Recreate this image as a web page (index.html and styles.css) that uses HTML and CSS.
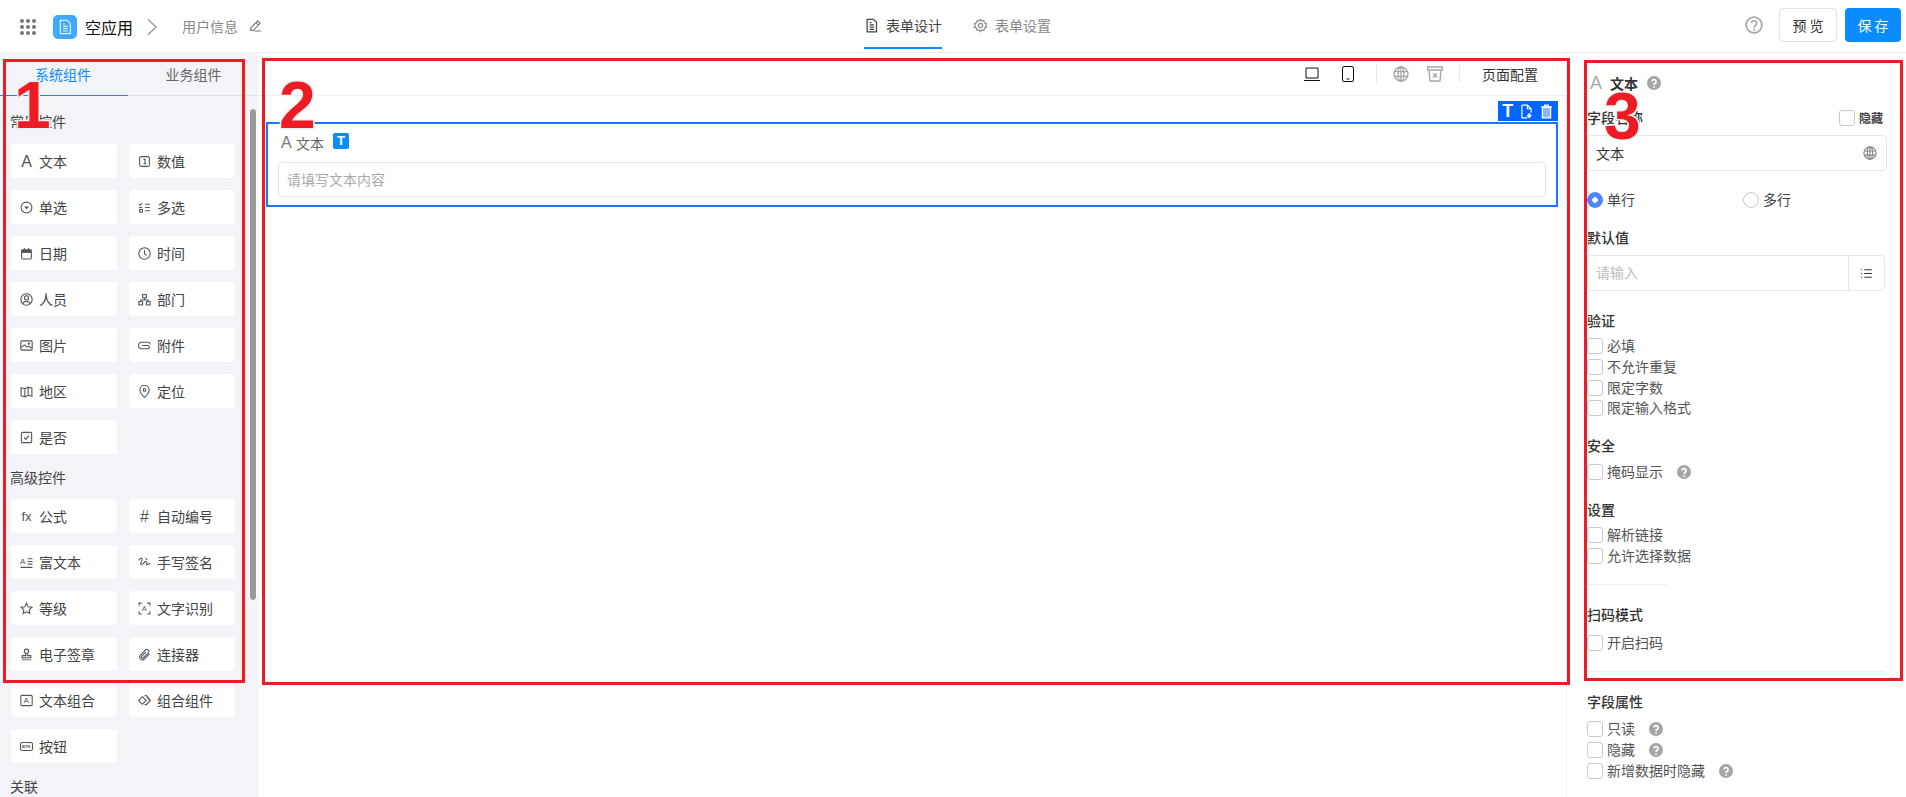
FILE: index.html
```html
<!DOCTYPE html>
<html lang="zh">
<head>
<meta charset="utf-8">
<title>表单设计</title>
<link rel="stylesheet" href="styles.css">
</head>
<body>
<svg class="sprite" aria-hidden="true">
  <symbol id="i-num" viewBox="0 0 24 24"><rect x="3" y="3" width="18" height="18" rx="3"/><path d="M10 8h3v8M10 16h5"/></symbol>
  <symbol id="i-drop" viewBox="0 0 24 24"><circle cx="12" cy="12" r="10"/><path class="solid" d="M7.500 10h9L12 15z"/></symbol>
  <symbol id="i-multi" viewBox="0 0 24 24"><path d="M2 6l2 2 4-4M13 6h9M13 12h9M13 18h9M2 12h6"/><rect x="3" y="15.500" width="5" height="5"/></symbol>
  <symbol id="i-date" viewBox="0 0 24 24"><rect x="3" y="5" width="18" height="17" rx="2"/><path class="solid" d="M3 5h18v6H3z"/><path d="M8 2v3M16 2v3"/></symbol>
  <symbol id="i-clock" viewBox="0 0 24 24"><circle cx="12" cy="12" r="10.500"/><path d="M12 6v6.500l4.500 3"/></symbol>
  <symbol id="i-person" viewBox="0 0 24 24"><circle cx="12" cy="12" r="10.500"/><circle cx="12" cy="9" r="3.800"/><path d="M5.500 19.500c1.500-5 11.500-5 13 0"/></symbol>
  <symbol id="i-dept" viewBox="0 0 24 24"><rect x="8.500" y="3" width="7" height="6"/><path d="M12 9v4M5 16v-3h14v3"/><rect x="1.500" y="16" width="7" height="6"/><rect x="15.500" y="16" width="7" height="6"/></symbol>
  <symbol id="i-image" viewBox="0 0 24 24"><rect x="1.500" y="3.500" width="21" height="17" rx="2"/><path d="M2 16l6-5 5 4 3-2 6 4"/><circle cx="16.500" cy="8.500" r="1.200"/></symbol>
  <symbol id="i-clip" viewBox="0 0 24 24"><path d="M23 10a5 5 0 0 0-5-4H7a6 6 0 0 0 0 12h11a3 3 0 0 0 0-6H8"/></symbol>
  <symbol id="i-map" viewBox="0 0 24 24"><path d="M2 5l7 2 6-3 7 2v15l-7-2-6 3-7-2zM9 7v15M15 4v15"/></symbol>
  <symbol id="i-pin" viewBox="0 0 24 24"><path d="M12 23s8.500-8 8.500-14a8.500 8.500 0 0 0-17 0c0 6 8.500 14 8.500 14z"/><circle cx="12" cy="9" r="2.500"/></symbol>
  <symbol id="i-yes" viewBox="0 0 24 24"><rect x="2.500" y="2.500" width="19" height="19" rx="2"/><path d="M7.500 12l3.500 3.500 5.500-7"/></symbol>
  <symbol id="i-rich" viewBox="0 0 24 24"><text class="svg-t" x="0" y="15" font-size="15">A</text><path d="M14 5h9M14 10h9M14 15h9M1 21h22"/></symbol>
  <symbol id="i-sign" viewBox="0 0 24 24"><path d="M2 8c2-6 8-5 5 1s-3 8 1 6 6-7 8-4-2 6 1 5 4-3 6-2M14 4l3 3"/></symbol>
  <symbol id="i-star" viewBox="0 0 24 24"><path d="M12 2.500l3 6.300 6.900.9-5 4.800 1.200 6.900-6.100-3.300-6.100 3.300 1.200-6.900-5-4.800 6.900-.9z"/></symbol>
  <symbol id="i-ocr" viewBox="0 0 24 24"><path d="M2 7V2h5M17 2h5v5M22 17v5h-5M7 22H2v-5"/><text class="svg-t" x="7.200" y="17" font-size="13">A</text></symbol>
  <symbol id="i-stamp" viewBox="0 0 24 24"><circle cx="12" cy="6" r="4"/><path d="M10.500 10v4H4v4h16v-4h-6.500v-4"/><path class="solid tint" d="M3 20h18v3H3z"/></symbol>
  <symbol id="i-link" viewBox="0 0 24 24"><path d="M21 11l-9 9a5 5 0 0 1-7.500-7l9-9a3.500 3.500 0 0 1 5.500 5l-9 9a2 2 0 0 1-3-3l8-8"/></symbol>
  <symbol id="i-group" viewBox="0 0 24 24"><rect x="1.500" y="2.500" width="21" height="19" rx="2"/><text class="svg-t" x="6.500" y="17.500" font-size="15">A</text></symbol>
  <symbol id="i-combo" viewBox="0 0 24 24"><path d="M8 5l7 7-7 7-7-7zM12 3.500l3-1 8 9.500-8 8-3-1M16 5.500l6.500 6.500"/></symbol>
  <symbol id="i-btn" viewBox="0 0 24 24"><rect x="1" y="4.500" width="22" height="15" rx="3"/><text class="svg-t" x="3.500" y="14.800" font-size="7.500" font-weight="700">BTN</text></symbol>
  <symbol id="i-globe" viewBox="0 0 24 24"><circle cx="12" cy="12" r="10.500"/><ellipse cx="12" cy="12" rx="4.500" ry="10.500"/><path d="M12 1.500v21M2 8.500h20M2 15.500h20"/></symbol>
  <symbol id="i-list" viewBox="0 0 24 24"><path d="M8 5h14M8 12h14M8 19h14M2 5h2M2 12h2M2 19h2"/></symbol>
  <symbol id="i-help" viewBox="0 0 24 24"><circle class="solid" cx="12" cy="12" r="12"/><path class="qm" d="M8.500 9.500a3.500 3.500 0 1 1 5.500 3c-1.500 1-2 1.500-2 3M12 17.500v2.500"/></symbol>
  <symbol id="i-doc" viewBox="0 0 24 24"><path d="M5 2h10l5 5v15H5zM9 11h7M9 14.500h7M9 18h7M9 7.500h3"/></symbol>
</svg>

<header class="topbar">
  <div class="brand">
    <span class="apps"><i></i><i></i><i></i><i></i><i></i><i></i><i></i><i></i><i></i></span>
    <span class="app-logo"><svg class="ico logo-doc"><use href="#i-doc"/></svg></span>
    <span class="app-name">空应用</span>
    <svg class="chevron" viewBox="0 0 12 20"><path d="M1.500 1.500L10.500 10l-9 8.500"/></svg>
    <span class="page-name">用户信息</span>
    <svg class="pencil" viewBox="0 0 24 24"><path d="M3 17L16 3.500l4.500 4.500L8 21H3zM13 7l4.500 4.500M10 22h12"/></svg>
  </div>
  <nav class="designer-tabs">
    <a class="designer-tab is-active"><svg class="ico tab-ico"><use href="#i-doc"/></svg>表单设计</a>
    <a class="designer-tab"><svg class="tab-ico gear" viewBox="0 0 24 24"><path d="M12 2l2 3 3.500-.8.900 3.500L22 9.500 20 12l2 2.500-3.600 1.800-.9 3.500-3.500-.8-2 3-2-3-3.500.8-.9-3.500L2 14.500 4 12 2 9.500l3.600-1.800.9-3.500 3.500.8z"/><circle cx="12" cy="12" r="3.500"/></svg>表单设置</a>
  </nav>
  <div class="actions">
    <svg class="top-help" viewBox="0 0 24 24"><circle cx="12" cy="12" r="10.500"/><path d="M8.500 9.500a3.500 3.500 0 1 1 5.500 3c-1.500 1-2 1.500-2 3M12 17v2.500"/></svg>
    <button class="btn btn-plain">预 览</button>
    <button class="btn btn-primary">保 存</button>
  </div>
</header>

<div class="workspace">
  <aside class="palette">
    <div class="palette-tabs">
      <span class="palette-tab is-active">系统组件</span>
      <span class="palette-tab">业务组件</span>
    </div>
    <div class="scroll-thumb"></div>
    <h3 class="group-title">常用控件</h3>
    <div class="widgets">
      <div class="widget"><span class="w-ico w-txt">A</span>文本</div>
      <div class="widget"><svg class="w-ico ico"><use href="#i-num"/></svg>数值</div>
      <div class="widget"><svg class="w-ico ico"><use href="#i-drop"/></svg>单选</div>
      <div class="widget"><svg class="w-ico ico"><use href="#i-multi"/></svg>多选</div>
      <div class="widget"><svg class="w-ico ico"><use href="#i-date"/></svg>日期</div>
      <div class="widget"><svg class="w-ico ico"><use href="#i-clock"/></svg>时间</div>
      <div class="widget"><svg class="w-ico ico"><use href="#i-person"/></svg>人员</div>
      <div class="widget"><svg class="w-ico ico"><use href="#i-dept"/></svg>部门</div>
      <div class="widget"><svg class="w-ico ico"><use href="#i-image"/></svg>图片</div>
      <div class="widget"><svg class="w-ico ico"><use href="#i-clip"/></svg>附件</div>
      <div class="widget"><svg class="w-ico ico"><use href="#i-map"/></svg>地区</div>
      <div class="widget"><svg class="w-ico ico"><use href="#i-pin"/></svg>定位</div>
      <div class="widget"><svg class="w-ico ico"><use href="#i-yes"/></svg>是否</div>
    </div>
    <h3 class="group-title">高级控件</h3>
    <div class="widgets">
      <div class="widget"><span class="w-ico w-txt w-fx">fx</span>公式</div>
      <div class="widget"><span class="w-ico w-txt">#</span>自动编号</div>
      <div class="widget"><svg class="w-ico ico"><use href="#i-rich"/></svg>富文本</div>
      <div class="widget"><svg class="w-ico ico"><use href="#i-sign"/></svg>手写签名</div>
      <div class="widget"><svg class="w-ico ico"><use href="#i-star"/></svg>等级</div>
      <div class="widget"><svg class="w-ico ico"><use href="#i-ocr"/></svg>文字识别</div>
      <div class="widget"><svg class="w-ico ico"><use href="#i-stamp"/></svg>电子签章</div>
      <div class="widget"><svg class="w-ico ico"><use href="#i-link"/></svg>连接器</div>
      <div class="widget"><svg class="w-ico ico"><use href="#i-group"/></svg>文本组合</div>
      <div class="widget"><svg class="w-ico ico"><use href="#i-combo"/></svg>组合组件</div>
      <div class="widget"><svg class="w-ico ico"><use href="#i-btn"/></svg>按钮</div>
    </div>
    <h3 class="group-title">关联</h3>
  </aside>

  <main class="canvas">
    <div class="canvas-bar">
      <svg class="bar-ico dark" viewBox="0 0 16 16"><path d="M2 2h12v10H2zM0 14.500h16"/></svg>
      <svg class="bar-ico dark phone" viewBox="0 0 12 16"><rect x=".5" y=".5" width="11" height="15" rx="1.500"/><path d="M4.500 13h3"/></svg>
      <span class="bar-sep"></span>
      <svg class="bar-ico ico muted"><use href="#i-globe"/></svg>
      <svg class="bar-ico muted bin" viewBox="0 0 16 16"><path d="M.5 1h15v3H.5zM2 4l1 11h10l1-11M6 7.500l4 4M10 7.500l-4 4"/></svg>
      <span class="bar-sep sep-wide"></span>
      <span class="bar-link">页面配置</span>
    </div>
    <div class="stage">
      <div class="field-tools">
        <span class="tool-t">T</span>
        <svg class="tool-ico" viewBox="0 0 12 16"><path d="M1 1h6l4 4v4M7 1v4h4M1 1v14h6"/><path class="tool-plus" d="M9 10v5M6.500 12.500h5"/></svg>
        <svg class="tool-ico" viewBox="0 0 12 16"><path d="M0 3h12M4 3V1h4v2"/><path class="tool-fill" d="M1.500 3.500h9V15h-9z"/></svg>
      </div>
      <div class="field-box">
        <div class="field-label"><span class="field-a">A</span><span>文本</span><span class="t-badge">T</span></div>
        <div class="fake-input">请填写文本内容</div>
      </div>
    </div>
  </main>

  <aside class="props">
    <div class="props-head"><span class="props-a">A</span><strong>文本</strong><svg class="help ico"><use href="#i-help"/></svg></div>
    <div class="row-between m15">
      <span class="h">字段名称</span>
      <label class="hide-toggle"><span class="box"></span><b>隐藏</b></label>
    </div>
    <div class="prop-input m7"><span>文本</span><svg class="ico globe"><use href="#i-globe"/></svg></div>
    <div class="radios">
      <label class="radio"><span class="dot is-on"></span>单行</label>
      <label class="radio"><span class="dot"></span>多行</label>
    </div>
    <div class="h m18">默认值</div>
    <div class="prop-addon m7">
      <span class="addon-main">请输入</span>
      <span class="addon-btn"><svg class="ico list"><use href="#i-list"/></svg></span>
    </div>
    <div class="h m20">验证</div>
    <div class="checks m7">
      <label class="check"><span class="box"></span>必填</label>
      <label class="check"><span class="box"></span>不允许重复</label>
      <label class="check check-short"><span class="box"></span>限定字数</label>
      <label class="check"><span class="box"></span>限定输入格式</label>
    </div>
    <div class="h m15">安全</div>
    <div class="checks m8">
      <label class="check"><span class="box"></span>掩码显示<svg class="help ico"><use href="#i-help"/></svg></label>
    </div>
    <div class="h m15">设置</div>
    <div class="checks m7">
      <label class="check"><span class="box"></span>解析链接</label>
      <label class="check"><span class="box"></span>允许选择数据</label>
    </div>
    <hr class="rule rule-short">
    <div class="h m20">扫码模式</div>
    <div class="checks m10">
      <label class="check"><span class="box"></span>开启扫码</label>
    </div>
    <hr class="rule rule-long">
    <div class="h m20">字段属性</div>
    <div class="checks m9">
      <label class="check"><span class="box"></span>只读<svg class="help ico"><use href="#i-help"/></svg></label>
      <label class="check"><span class="box"></span>隐藏<svg class="help ico"><use href="#i-help"/></svg></label>
      <label class="check"><span class="box"></span>新增数据时隐藏<svg class="help ico"><use href="#i-help"/></svg></label>
    </div>
  </aside>
</div>

<div class="mark mark-1"></div>
<div class="mark mark-2"></div>
<div class="mark mark-3"></div>
<span class="num num-1">1</span>
<span class="num num-2">2</span>
<span class="num num-3">3</span>
</body>
</html>
```

FILE: styles.css
```css
* { box-sizing: border-box; }
html, body { margin: 0; height: 100%; }
body {
  position: relative;
  height: 797px;
  overflow: hidden;
  display: flex;
  flex-direction: column;
  background: #fff;
  color: #444;
  font: 14px/20px "Noto Sans CJK SC", "Liberation Sans", sans-serif;
}
.sprite { position: absolute; width: 0; height: 0; }
.ico { fill: none; stroke: currentColor; stroke-width: 2; }
.solid { fill: currentColor; stroke: none; }
.tint { opacity: .55; }
.svg-t { fill: currentColor; stroke: none; font-family: "Liberation Sans", sans-serif; }

/* top bar */
.topbar {
  flex: none;
  height: 53px;
  display: grid;
  grid-template-columns: 1fr auto 1fr;
  align-items: start;
  padding: 0 5px 0 14px;
  border-bottom: 1px solid #eeeef2;
}
.brand { display: flex; align-items: center; height: 24px; margin-top: 15px; padding-left: 6px; }
.apps { display: grid; grid-template-columns: repeat(3, 4px); gap: 2px; width: 16px; margin-right: 17px; }
.apps i { width: 4px; height: 4px; border-radius: 50%; background: #777; }
.app-logo {
  width: 24px; height: 24px; border-radius: 5px; background: #40a9ff;
  display: flex; align-items: center; justify-content: center; color: #dcefff;
}
.logo-doc { width: 16px; height: 16px; stroke-width: 1.800; }
.app-name { margin-left: 8px; font-size: 16px; color: #111; }
.chevron { width: 12px; height: 18px; margin-left: 13px; fill: none; stroke: #999; stroke-width: 1.500; }
.page-name { margin-left: 24px; margin-top: -3px; color: #888; }
.pencil { width: 13px; height: 13px; margin-left: 11px; margin-top: -4px; fill: none; stroke: #777; stroke-width: 2; }

.designer-tabs { display: flex; gap: 31px; }
.designer-tab {
  display: flex; align-items: flex-start; gap: 7px;
  padding: 15px 0 12px; color: #888;
  border-bottom: 2px solid transparent;
}
.designer-tab.is-active { color: #444; border-bottom-color: #0a8cff; }
.tab-ico { width: 15px; height: 15px; margin-top: 3px; }
.gear { fill: none; stroke: currentColor; stroke-width: 1.800; }

.actions { display: flex; align-items: center; justify-content: flex-end; height: 34px; margin-top: 8px; }
.top-help { width: 18px; height: 18px; margin-right: 16px; fill: none; stroke: #aaa; stroke-width: 2.400; }
.btn { height: 34px; border-radius: 4px; font: inherit; padding: 0; }
.btn-plain { width: 58px; background: #fff; border: 1px solid #e2e2e6; color: #333; }
.btn-primary { width: 56px; margin-left: 8px; background: #0a8cff; border: 0; color: #fff; }

/* layout */
.workspace { flex: 1; display: flex; min-height: 0; }

/* palette */
.palette {
  position: relative;
  flex: none; width: 258px; padding-left: 11px;
  background: #f3f3f8; overflow: hidden;
}
.palette-tabs { display: flex; height: 43px; margin-left: -11px; border-bottom: 1px solid #e1e1e8; }
.palette-tab {
  width: 128px; height: 43px; padding-top: 11px; text-align: center; color: #666;
}
.palette-tab + .palette-tab { padding-left: 3px; }
.palette-tab.is-active { color: #0a8cff; border-bottom: 1px solid #0a8cff; padding-right: 2px; }
.scroll-thumb {
  position: absolute; left: 249px; top: 55px;
  width: 8px; height: 493px; background: #999;
  border: 1px solid #fff; border-radius: 4px;
}
.group-title { margin: 12px 0 11px -1px; font-size: 14px; font-weight: 400; line-height: 22px; color: #444; }
.palette-tabs + .scroll-thumb + .group-title { margin-top: 14px; margin-bottom: 12px; }
.widgets { display: grid; grid-template-columns: 106px 106px; gap: 12px; }
.widget {
  display: flex; align-items: center; gap: 6px;
  height: 34px; padding-left: 9px;
  background: #fff; border-radius: 4px; color: #444;
}
.w-ico { flex: none; width: 13px; height: 13px; color: #555; }
.w-txt {
  display: flex; align-items: center; justify-content: center;
  font: 16px/13px "Liberation Sans", sans-serif;
}
.w-fx { font-size: 13px; }

/* canvas */
.canvas { flex: 1; min-width: 0; background: #fff; border-right: 1px solid #eeeef2; }
.canvas-bar {
  display: flex; align-items: center; justify-content: flex-end;
  height: 43px; padding-right: 28px; border-bottom: 1px solid #eeeef0;
}
.bar-ico { flex: none; width: 16px; height: 16px; fill: none; }
.dark { stroke: #111; stroke-width: 1; }
.phone { width: 12px; margin-left: 22px; }
.muted { color: #a5a5a5; stroke: #a5a5a5; }
.bin { margin-left: 18px; stroke-width: 1.300; }
.bar-sep { flex: none; width: 1px; height: 18px; margin: 0 16px 0 22px; background: #e6e6ec; }
.sep-wide { margin: 0 22px 0 16px; }
.bar-link { color: #333; }
.stage { display: flex; flex-direction: column; padding: 5px 8px 0; }
.field-tools {
  align-self: flex-end; display: flex; align-items: center; justify-content: space-around;
  width: 60px; height: 20px; margin-bottom: 1px; padding: 0 2px 0 0; background: #0066ff; color: #fff;
}
.tool-t { font: 700 18px/20px "Liberation Sans", sans-serif; }
.tool-ico { width: 11px; height: 15px; fill: none; stroke: #fff; stroke-width: 1.300; }
.tool-fill { fill: #8db8ff; stroke: #fff; }
.tool-plus { stroke-width: 2; }
.field-box { height: 85px; padding: 0 10px 8px; border: 2px solid #1677ff; }
.field-label { display: flex; align-items: center; height: 38px; padding: 0 0 1px 3px; color: #666; }
.field-a { width: 15px; font: 16px/20px "Liberation Sans", sans-serif; color: #777; }
.t-badge {
  width: 16px; height: 16px; margin: -3px 0 0 9px; border-radius: 2px;
  background: #0a8cff; color: #fff; text-align: center;
  font: 700 13px/16px "Liberation Sans", sans-serif;
}
.fake-input {
  height: 35px; padding: 6px 8px; color: #aaa;
  border: 1px solid #e4e4e8; border-radius: 4px;
}

/* properties */
.props { flex: none; width: 339px; padding: 20px 19px 0 20px; background: #fff; }
.props-head { display: flex; align-items: center; height: 20px; padding-left: 3px; }
.props-a { width: 20px; font: 18px/20px "Liberation Sans", sans-serif; color: #aaa; }
.props-head strong { font-size: 14px; font-weight: 700; color: #333; }
.help { flex: none; width: 14px; height: 14px; margin-left: 9px; color: #a5a5a5; }
.qm { fill: none; stroke: #fff; stroke-width: 3; }
.h { font-weight: 500; color: #333; line-height: 18px; padding-bottom: 2px; }
.m7 { margin-top: 7px; } .m8 { margin-top: 8px; } .m9 { margin-top: 9px; } .m10 { margin-top: 10px; }
.m15 { margin-top: 15px; } .m18 { margin-top: 18px; } .m20 { margin-top: 20px; }
.row-between { display: flex; justify-content: space-between; align-items: center; padding-right: 4px; }
.hide-toggle { display: flex; align-items: center; gap: 4px; }
.hide-toggle b { font-size: 12px; font-weight: 700; color: #444; }
.box { flex: none; width: 16px; height: 16px; border: 1px solid #c9c9d6; border-radius: 3px; background: #fff; }
.prop-input {
  display: flex; align-items: center; justify-content: space-between;
  width: 300px; height: 36px; padding: 0 9px 0 8px;
  border: 1px solid #e6e6e9; border-radius: 4px; color: #333;
}
.globe { width: 14px; height: 14px; color: #888; stroke-width: 2; }
.radios { display: flex; margin-top: 19px; }
.radio { flex: none; display: flex; align-items: center; gap: 4px; width: 156px; height: 20px; padding-bottom: 2px; color: #444; }
.dot { flex: none; width: 16px; height: 16px; margin-top: 2px; border: 1px solid #c9c9d6; border-radius: 50%; }
.dot.is-on { background: radial-gradient(circle, #fff 0 2.5px, #4f85f7 3px); border-color: #4f85f7; }
.prop-addon {
  display: flex; width: 298px; height: 36px;
  border: 1px solid #e6e6e9; border-radius: 4px;
}
.addon-main { flex: 1; padding: 6px 8px; color: #bbb; border-right: 1px solid #e6e6e9; }
.addon-btn { display: flex; align-items: center; justify-content: center; width: 35px; }
.list { width: 13px; height: 13px; color: #333; }
.checks { display: flex; flex-direction: column; }
.check { display: flex; align-items: center; gap: 4px; height: 21px; padding-bottom: 7px; line-height: 16px; color: #555; }
.check .box { margin-top: 2px; }
.check-short { height: 20px; padding-bottom: 6px; }
.check .help { margin-left: 10px; margin-top: 2px; }
.rule { margin: 15px 0 0; border: 0; border-top: 1px solid #eeeef2; }
.rule-short { width: 80px; }
.rule-long { width: 298px; }

/* annotations */
.mark { position: absolute; border: 3px solid #ed1c24; pointer-events: none; }
.mark-1 { left: 3px; top: 59px; width: 242px; height: 624px; }
.mark-2 { left: 262px; top: 58px; width: 1308px; height: 627px; }
.mark-3 { left: 1584px; top: 60px; width: 319px; height: 621px; }
.num {
  position: absolute;
  font: 700 66px/66px "Liberation Sans", sans-serif; color: #ed1c24;
  -webkit-text-stroke: 3px #f1f1f1; paint-order: stroke fill;
}
.num-1 { left: 14px; top: 72px; }
.num-2 { left: 279px; top: 72px; }
.num-3 { left: 1604px; top: 83px; }
```
